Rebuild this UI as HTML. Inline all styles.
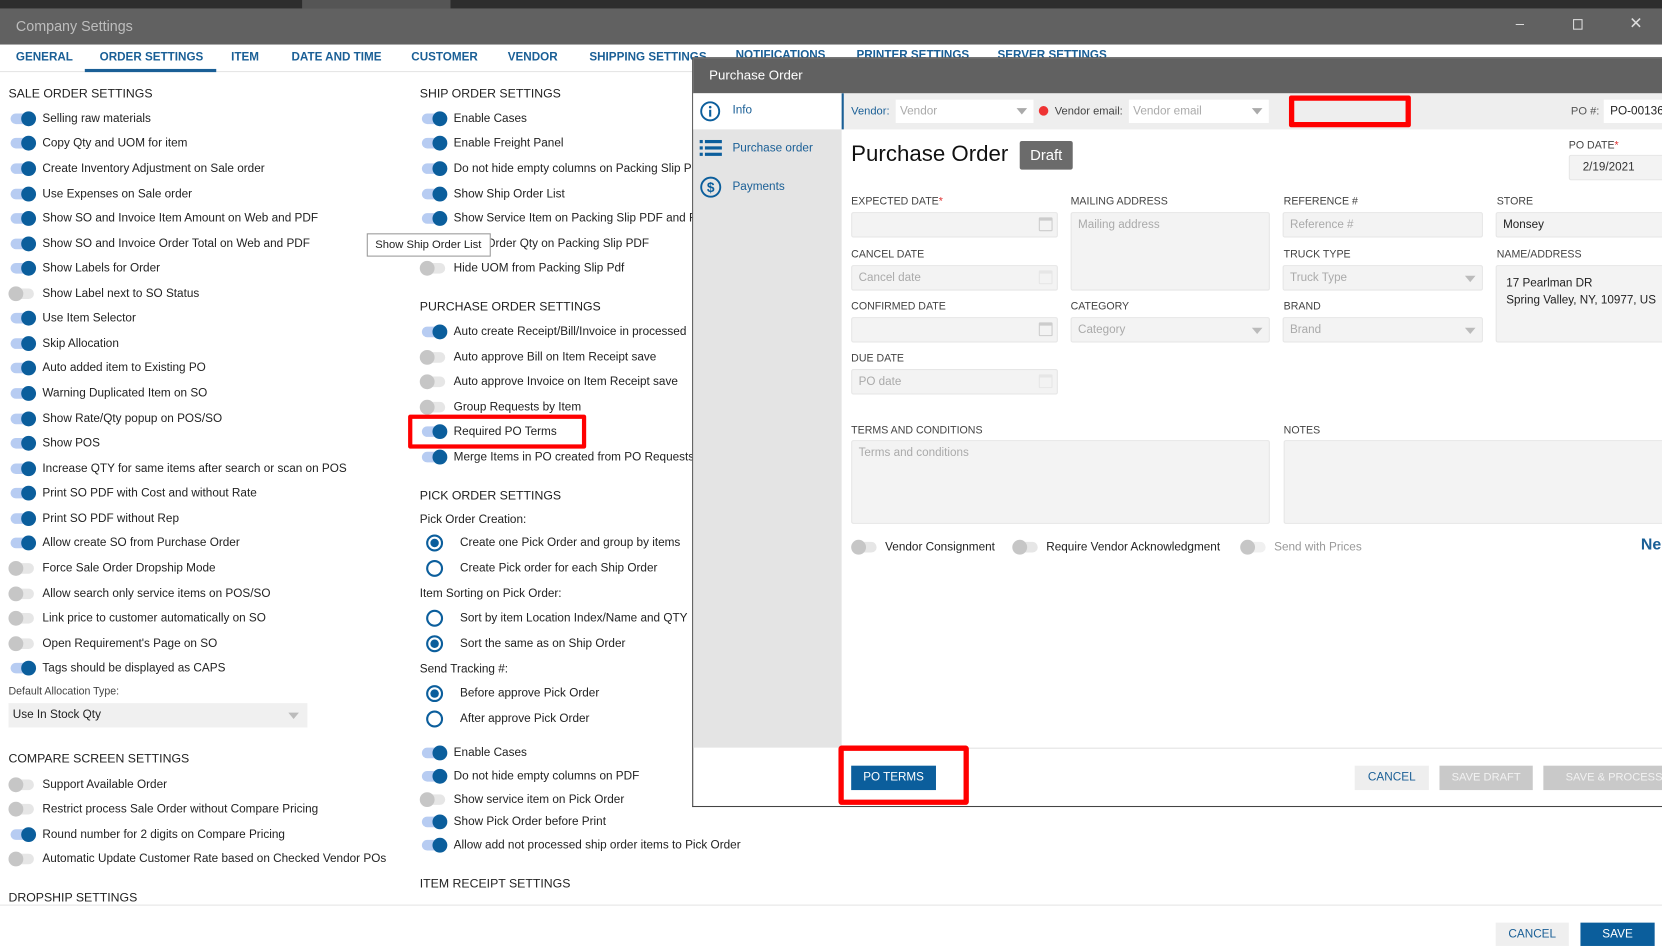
<!DOCTYPE html>
<html><head><meta charset="utf-8"><style>
*{box-sizing:border-box;margin:0;padding:0}
html,body{width:1662px;height:946px;overflow:hidden;background:#fff}
#s{position:absolute;left:0;top:0;width:1568px;height:892px;transform:scale(1.06,1.0605);transform-origin:0 0;font-family:"Liberation Sans",sans-serif;font-size:11.1px;color:#222;overflow:hidden}
.a{position:absolute;white-space:nowrap}
.col{position:absolute;top:0}
.r{position:absolute;left:0;height:16px;line-height:16px;padding-left:32px;white-space:nowrap}
.r i{position:absolute;left:2px;top:3px;width:22px;height:10px;border-radius:5px;background:#e6e6e6}
.r i:after{content:"";position:absolute;left:-2px;top:-2px;width:14px;height:14px;border-radius:50%;background:#c6c6c6}
.r.on i{background:#b7ccf2}
.r.on i:after{left:10px;background:#0b5e9c}
.h{position:absolute;left:0;font-size:11.6px;color:#222;white-space:nowrap}
.rd{position:absolute;left:6px;height:16px;line-height:16px;padding-left:32px;white-space:nowrap}
.rd b{position:absolute;left:0;top:0;width:16px;height:16px;border:2px solid #0b5e9c;border-radius:50%}
.rd.c b:after{content:"";position:absolute;left:2px;top:2px;width:8px;height:8px;border-radius:50%;background:#0b5e9c}
.tab{position:absolute;top:48px;color:#1a5f96;font-size:11px;font-weight:bold;white-space:nowrap}
.lb{position:absolute;font-size:10px;color:#444;white-space:nowrap}
.in{position:absolute;background:#f3f3f3;border:1px solid #e6e6e6;border-radius:2px;color:#aaa;font-size:11px;padding:5px 6px;white-space:nowrap}
.cal{position:absolute;right:4px;top:4px;width:13px;height:13px;border:1.5px solid #ccc;border-top-width:3px;border-radius:1px}
.dd{position:absolute;right:6px;top:9px;width:0;height:0;border-left:5px solid transparent;border-right:5px solid transparent;border-top:6px solid #bbb}
.ast{color:#e03030}
</style></head><body><div id="s">

<div class="a" style="left:0;top:0;width:1568px;height:8px;background:#2d2d2d"></div>
<div class="a" style="left:285px;top:0;width:140px;height:8px;background:#555"></div>
<div class="a" style="left:0;top:8px;width:1568px;height:34px;background:#616161"></div>
<div class="a" style="left:15px;top:17px;color:#bdbdbd;font-size:13.5px">Company Settings</div>
<div class="a" style="left:1430px;top:14px;color:#ddd;font-size:14px">–</div>
<div class="a" style="left:1484px;top:18px;width:9px;height:10px;border:1.5px solid #ddd"></div>
<div class="a" style="left:1537px;top:13px;color:#ddd;font-size:15px">✕</div>

<div class="a" style="left:0;top:67px;width:1568px;height:1px;background:#e5e5e5"></div>
<div class="tab" style="left:15px">GENERAL</div>
<div class="tab" style="left:94px">ORDER SETTINGS</div>
<div class="a" style="left:80px;top:65px;width:124px;height:3px;background:#1a5f96"></div>
<div class="tab" style="left:218px">ITEM</div>
<div class="tab" style="left:275px">DATE AND TIME</div>
<div class="tab" style="left:388px">CUSTOMER</div>
<div class="tab" style="left:479px">VENDOR</div>
<div class="tab" style="left:556px">SHIPPING SETTINGS</div>
<div class="tab" style="left:694px;top:46px">NOTIFICATIONS</div>
<div class="tab" style="left:808px;top:46px">PRINTER SETTINGS</div>
<div class="tab" style="left:941px;top:46px">SERVER SETTINGS</div>

<div class="col" style="left:8px">
<div class="h" style="top:82px">SALE ORDER SETTINGS</div>
<div class="r on" style="top:104px"><i></i>Selling raw materials</div>
<div class="r on" style="top:127px"><i></i>Copy Qty and UOM for item</div>
<div class="r on" style="top:151px"><i></i>Create Inventory Adjustment on Sale order</div>
<div class="r on" style="top:175px"><i></i>Use Expenses on Sale order</div>
<div class="r on" style="top:198px"><i></i>Show SO and Invoice Item Amount on Web and PDF</div>
<div class="r on" style="top:222px"><i></i>Show SO and Invoice Order Total on Web and PDF</div>
<div class="r on" style="top:245px"><i></i>Show Labels for Order</div>
<div class="r" style="top:269px"><i></i>Show Label next to SO Status</div>
<div class="r on" style="top:292px"><i></i>Use Item Selector</div>
<div class="r on" style="top:316px"><i></i>Skip Allocation</div>
<div class="r on" style="top:339px"><i></i>Auto added item to Existing PO</div>
<div class="r on" style="top:363px"><i></i>Warning Duplicated Item on SO</div>
<div class="r on" style="top:387px"><i></i>Show Rate/Qty popup on POS/SO</div>
<div class="r on" style="top:410px"><i></i>Show POS</div>
<div class="r on" style="top:434px"><i></i>Increase QTY for same items after search or scan on POS</div>
<div class="r on" style="top:457px"><i></i>Print SO PDF with Cost and without Rate</div>
<div class="r on" style="top:481px"><i></i>Print SO PDF without Rep</div>
<div class="r on" style="top:504px"><i></i>Allow create SO from Purchase Order</div>
<div class="r" style="top:528px"><i></i>Force Sale Order Dropship Mode</div>
<div class="r" style="top:552px"><i></i>Allow search only service items on POS/SO</div>
<div class="r" style="top:575px"><i></i>Link price to customer automatically on SO</div>
<div class="r" style="top:599px"><i></i>Open Requirement's Page on SO</div>
<div class="r on" style="top:622px"><i></i>Tags should be displayed as CAPS</div>
<div class="a" style="left:0;top:647px;font-size:10px;color:#444">Default Allocation Type:</div>
<div class="a" style="left:0;top:663px;width:282px;height:23px;background:#f0f0f0;padding:5px 4px">Use In Stock Qty<span class="dd" style="top:9px;right:8px"></span></div>
<div class="h" style="top:709px">COMPARE SCREEN SETTINGS</div>
<div class="r" style="top:732px"><i></i>Support Available Order</div>
<div class="r" style="top:755px"><i></i>Restrict process Sale Order without Compare Pricing</div>
<div class="r on" style="top:779px"><i></i>Round number for 2 digits on Compare Pricing</div>
<div class="r" style="top:802px"><i></i>Automatic Update Customer Rate based on Checked Vendor POs</div>
<div class="h" style="top:840px">DROPSHIP SETTINGS</div>
</div>

<div class="col" style="left:396px">
<div class="h" style="top:82px">SHIP ORDER SETTINGS</div>
<div class="r on" style="top:104px"><i></i>Enable Cases</div>
<div class="r on" style="top:127px"><i></i>Enable Freight Panel</div>
<div class="r on" style="top:151px"><i></i>Do not hide empty columns on Packing Slip PDF</div>
<div class="r on" style="top:175px"><i></i>Show Ship Order List</div>
<div class="r on" style="top:198px"><i></i>Show Service Item on Packing Slip PDF and Fi</div>
<div class="r on" style="top:222px"><i></i>Show Order Qty on Packing Slip PDF</div>
<div class="r" style="top:245px"><i></i>Hide UOM from Packing Slip Pdf</div>
<div class="h" style="top:283px">PURCHASE ORDER SETTINGS</div>
<div class="r on" style="top:305px"><i></i>Auto create Receipt/Bill/Invoice in processed</div>
<div class="r" style="top:329px"><i></i>Auto approve Bill on Item Receipt save</div>
<div class="r" style="top:352px"><i></i>Auto approve Invoice on Item Receipt save</div>
<div class="r" style="top:376px"><i></i>Group Requests by Item</div>
<div class="r on" style="top:399px"><i></i>Required PO Terms</div>
<div class="r on" style="top:423px"><i></i>Merge Items in PO created from PO Requests</div>
<div class="h" style="top:461px">PICK ORDER SETTINGS</div>
<div class="a" style="left:0;top:484px">Pick Order Creation:</div>
<div class="rd c" style="top:504px"><b></b>Create one Pick Order and group by items</div>
<div class="rd" style="top:528px"><b></b>Create Pick order for each Ship Order</div>
<div class="a" style="left:0;top:554px">Item Sorting on Pick Order:</div>
<div class="rd" style="top:575px"><b></b>Sort by item Location Index/Name and QTY</div>
<div class="rd c" style="top:599px"><b></b>Sort the same as on Ship Order</div>
<div class="a" style="left:0;top:625px">Send Tracking #:</div>
<div class="rd c" style="top:646px"><b></b>Before approve Pick Order</div>
<div class="rd" style="top:670px"><b></b>After approve Pick Order</div>
<div class="r on" style="top:702px"><i></i>Enable Cases</div>
<div class="r on" style="top:724px"><i></i>Do not hide empty columns on PDF</div>
<div class="r" style="top:746px"><i></i>Show service item on Pick Order</div>
<div class="r on" style="top:767px"><i></i>Show Pick Order before Print</div>
<div class="r on" style="top:789px"><i></i>Allow add not processed ship order items to Pick Order</div>
<div class="h" style="top:827px">ITEM RECEIPT SETTINGS</div>
</div>
<div class="a" style="left:385px;top:391px;width:168px;height:32px;border:4px solid #f00;border-radius:2px"></div>
<div class="a" style="left:346px;top:220px;width:117px;height:22px;border:1px solid #999;background:#fff;padding:4px 7px;font-size:10.6px;overflow:hidden">Show Ship Order List</div>

<div class="a" style="left:0;top:853px;width:1568px;height:39px;background:#fff;border-top:1px solid #e5e5e5"></div>
<div class="a" style="left:1411px;top:870px;width:69px;height:22px;background:#efefef;color:#1a5f96;text-align:center;line-height:22px">CANCEL</div>
<div class="a" style="left:1491px;top:870px;width:70px;height:22px;background:#0b5e9c;color:#fff;text-align:center;line-height:22px">SAVE</div>

<div class="a" style="left:653px;top:54px;width:915px;height:707px;background:#fff;border:1px solid #444;border-right:none"></div>
<div class="a" style="left:654px;top:55px;width:914px;height:33px;background:#616161"></div>
<div class="a" style="left:669px;top:64px;color:#fff;font-size:12.5px">Purchase Order</div>
<div class="a" style="left:654px;top:88px;width:140px;height:617px;background:#e4e4e4"></div>
<div class="a" style="left:654px;top:88px;width:140px;height:34px;background:#fff"></div>
<svg class="a" style="left:660px;top:95px" width="20" height="20" viewBox="0 0 20 20"><circle cx="10" cy="10" r="8.5" fill="none" stroke="#0b5e9c" stroke-width="1.8"/><circle cx="10" cy="6" r="1.2" fill="#0b5e9c"/><rect x="9" y="8.5" width="2" height="6.5" fill="#0b5e9c"/></svg>
<div class="a" style="left:691px;top:98px;color:#1a5f96">Info</div>
<svg class="a" style="left:660px;top:131px" width="22" height="20" viewBox="0 0 22 20"><g fill="#0b5e9c"><rect x="0" y="1" width="3" height="3"/><rect x="5" y="1" width="16" height="3"/><rect x="0" y="7" width="3" height="3"/><rect x="5" y="7" width="16" height="3"/><rect x="0" y="13" width="3" height="3"/><rect x="5" y="13" width="16" height="3"/></g></svg>
<div class="a" style="left:691px;top:134px;color:#1a5f96">Purchase order</div>
<svg class="a" style="left:660px;top:166px" width="21" height="21" viewBox="0 0 21 21"><circle cx="10.5" cy="10.5" r="9" fill="none" stroke="#0b5e9c" stroke-width="1.8"/><text x="10.5" y="15" text-anchor="middle" font-size="13" font-family="Liberation Sans" fill="#0b5e9c" font-weight="bold">$</text></svg>
<div class="a" style="left:691px;top:170px;color:#1a5f96">Payments</div>

<div class="a" style="left:794px;top:88px;width:774px;height:34px;background:#eee;border-left:2px solid #1a5f96"></div>
<div class="a" style="left:803px;top:99px;color:#1a5f96;font-size:10.5px">Vendor:</div>
<div class="a" style="left:845px;top:94px;width:130px;height:22px;background:#fff;color:#aaa;padding:5px 4px">Vendor<span class="dd" style="top:8px;border-top-color:#aaa"></span></div>
<div class="a" style="left:980px;top:100px;width:9px;height:9px;border-radius:50%;background:#e33"></div>
<div class="a" style="left:995px;top:99px;color:#444;font-size:10.5px">Vendor email:</div>
<div class="a" style="left:1065px;top:94px;width:132px;height:22px;background:#fff;color:#aaa;padding:5px 4px">Vendor email<span class="dd" style="top:8px;border-top-color:#aaa"></span></div>
<div class="a" style="left:1216px;top:90px;width:115px;height:30px;border:5px solid #f00;border-radius:2px;background:#eee"></div>
<div class="a" style="left:1482px;top:99px;color:#555;font-size:10.5px">PO #:</div>
<div class="a" style="left:1513px;top:94px;width:60px;height:22px;background:#fff;padding:5px 6px">PO-00136</div>

<div class="a" style="left:803px;top:134px;font-size:21px;color:#111">Purchase Order</div>
<div class="a" style="left:962px;top:133px;width:50px;height:27px;background:#6b6b6b;border-radius:2px;color:#fff;font-size:14px;text-align:center;line-height:27px">Draft</div>
<div class="lb" style="left:1480px;top:132px">PO DATE<span class="ast">*</span></div>
<div class="in" style="left:1480px;top:146px;width:100px;height:24px;color:#333">&nbsp;&nbsp;2/19/2021</div>

<div class="lb" style="left:803px;top:185px">EXPECTED DATE<span class="ast">*</span></div>
<div class="in" style="left:803px;top:200px;width:195px;height:24px"><span class="cal"></span></div>
<div class="lb" style="left:803px;top:235px">CANCEL DATE</div>
<div class="in" style="left:803px;top:250px;width:195px;height:24px">Cancel date<span class="cal" style="border-color:#e6e6e6"></span></div>
<div class="lb" style="left:803px;top:284px">CONFIRMED DATE</div>
<div class="in" style="left:803px;top:299px;width:195px;height:24px"><span class="cal"></span></div>
<div class="lb" style="left:803px;top:333px">DUE DATE</div>
<div class="in" style="left:803px;top:348px;width:195px;height:24px">PO date<span class="cal" style="border-color:#e6e6e6"></span></div>

<div class="lb" style="left:1010px;top:185px">MAILING ADDRESS</div>
<div class="in" style="left:1010px;top:200px;width:188px;height:74px">Mailing address</div>
<div class="lb" style="left:1010px;top:284px">CATEGORY</div>
<div class="in" style="left:1010px;top:299px;width:188px;height:24px">Category<span class="dd"></span></div>

<div class="lb" style="left:1211px;top:185px">REFERENCE #</div>
<div class="in" style="left:1210px;top:200px;width:189px;height:24px">Reference #</div>
<div class="lb" style="left:1211px;top:235px">TRUCK TYPE</div>
<div class="in" style="left:1210px;top:250px;width:189px;height:24px">Truck Type<span class="dd"></span></div>
<div class="lb" style="left:1211px;top:284px">BRAND</div>
<div class="in" style="left:1210px;top:299px;width:189px;height:24px">Brand<span class="dd"></span></div>

<div class="lb" style="left:1412px;top:185px">STORE</div>
<div class="in" style="left:1411px;top:200px;width:170px;height:24px;color:#222">Monsey</div>
<div class="lb" style="left:1412px;top:235px">NAME/ADDRESS</div>
<div class="in" style="left:1411px;top:250px;width:170px;height:73px;color:#222;padding:8px 9px;line-height:16px">17 Pearlman DR<br>Spring Valley, NY, 10977, US</div>

<div class="lb" style="left:803px;top:401px">TERMS AND CONDITIONS</div>
<div class="in" style="left:803px;top:415px;width:395px;height:79px">Terms and conditions</div>
<div class="lb" style="left:1211px;top:401px">NOTES</div>
<div class="in" style="left:1211px;top:415px;width:370px;height:79px"></div>

<div class="r" style="left:803px;top:508px"><i></i>Vendor Consignment</div>
<div class="r" style="left:955px;top:508px"><i></i>Require Vendor Acknowledgment</div>
<div class="r" style="left:1170px;top:508px;color:#999"><i style="background:#f0f0f0"></i>Send with Prices</div>
<div class="a" style="left:1548px;top:505px;color:#1a5f96;font-size:15px;font-weight:bold">Ne</div>

<div class="a" style="left:795px;top:705px;width:773px;height:1px;background:#e2e2e2"></div>
<div class="a" style="left:791px;top:703px;width:123px;height:56px;border:5px solid #f00;border-radius:3px"></div>
<div class="a" style="left:803px;top:722px;width:80px;height:23px;background:#0b5e9c;color:#fff;text-align:center;line-height:23px;font-size:11px">PO TERMS</div>
<div class="a" style="left:1278px;top:722px;width:70px;height:23px;background:#eee;color:#1a5f96;text-align:center;line-height:23px">CANCEL</div>
<div class="a" style="left:1358px;top:722px;width:88px;height:23px;background:#c9c9c9;color:#f2f2f2;text-align:center;line-height:23px;font-size:10.5px">SAVE DRAFT</div>
<div class="a" style="left:1456px;top:722px;width:120px;height:23px;background:#c9c9c9;color:#f2f2f2;line-height:23px;padding-left:21px;font-size:10.5px">SAVE &amp; PROCESS</div>

</div></body></html>
